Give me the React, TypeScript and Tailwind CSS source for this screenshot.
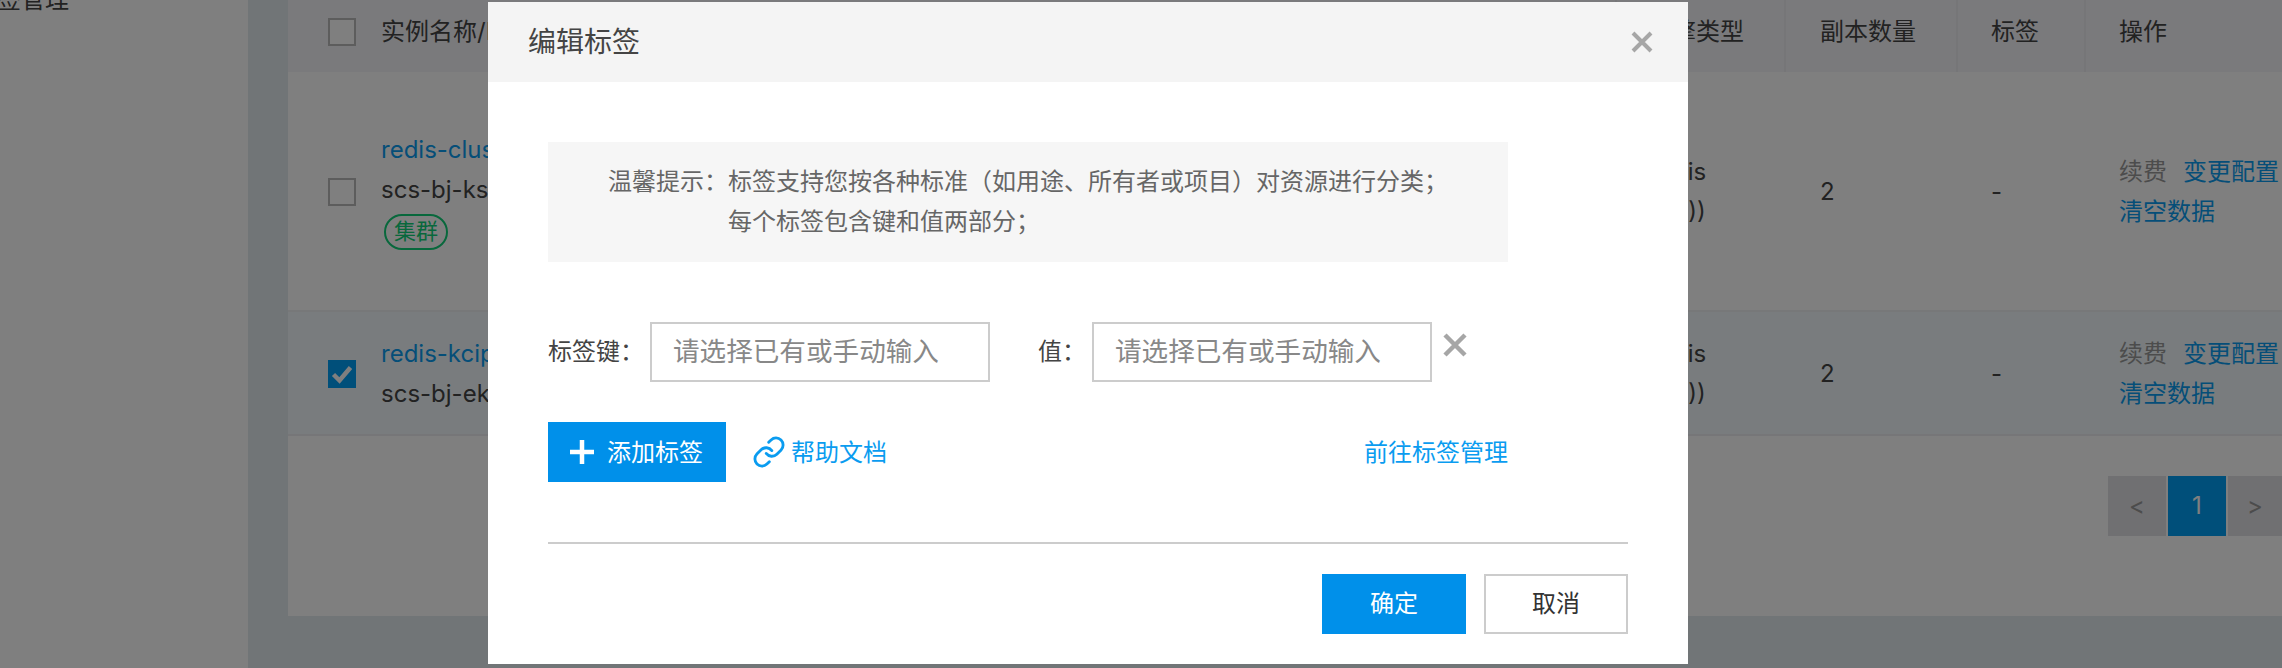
import React from "react";

const cols = "grid grid-cols-[93px_1236px_169px_172px_128px_196px]";

function Checkbox({ checked }: { checked?: boolean }) {
  if (checked) {
    return (
      <div className="w-[28px] h-[28px] bg-[#009ef5] flex items-center justify-center">
        <svg width="22" height="20" viewBox="0 0 22 20">
          <path d="M2.5 10.5 L8.5 16.5 L19.5 3.5" fill="none" stroke="#fff" strokeWidth="4.5" />
        </svg>
      </div>
    );
  }
  return <div className="w-[28px] h-[28px] border-2 border-[#bbbbbb] bg-white" />;
}

function Row({ name, id, badge, checked, className }: { name: string; id: string; badge?: boolean; checked?: boolean; className: string }) {
  return (
    <div className={`${cols} items-center pt-[2px] text-[24px] leading-[40px] text-[#444444] ${className}`}>
      <div className="pl-[40px]"><Checkbox checked={checked} /></div>
      <div className={badge ? "-mt-[4px]" : ""}>
        <div className="text-[#0b9df0]">{name}</div>
        <div>{id}</div>
        {badge && (
          <div className="ml-[3px] mt-[4px] w-[64px] h-[36px] rounded-[18px] border-2 border-[#10d078] text-[#10d078] text-[22px] leading-[30px] text-center">集群</div>
        )}
      </div>
      <div className="pl-[27px]">
        <div>Redis</div>
        <div>(5.0))</div>
      </div>
      <div className="pl-[34px]">2</div>
      <div className="pl-[33px]">-</div>
      <div className="pl-[33px]">
        <div className="flex gap-[16px]">
          <span className="text-[#999999]">续费</span>
          <span className="text-[#0b9df0] whitespace-nowrap">变更配置</span>
        </div>
        <div className="text-[#0b9df0]">清空数据</div>
      </div>
    </div>
  );
}

function Field({ label, labelClass }: { label: string; labelClass: string }) {
  return (
    <>
      <div className={`text-[24px] text-[#444444] whitespace-nowrap ${labelClass}`}>{label}</div>
      <div className="w-[340px] h-[60px] border-2 border-[#cccccc] flex items-center pl-[21px] text-[26.6px] text-[#888888] whitespace-nowrap">请选择已有或手动输入</div>
    </>
  );
}

export default function App() {
  return (
    <div
      className="relative w-full h-[668px] overflow-hidden flex bg-white"
      style={{ fontFamily: 'Inter, "Noto Sans CJK SC", sans-serif' }}
    >
      <aside className="w-[248px] shrink-0 bg-white overflow-hidden">
        <div className="-mt-[24px] -ml-[27px] text-[24px] leading-[48px] text-[#444444] whitespace-nowrap">标签管理</div>
      </aside>
      <main className="flex-1 min-w-0 bg-[#e2eaef] pl-[40px]">
        <div className="bg-white h-[616px] flex flex-col">
          <div className={`${cols} h-[72px] bg-[#f4f4f8] items-center text-[24px] text-[#444444]`}>
            <div className="pl-[40px] pb-[8px]"><Checkbox /></div>
            <div className="h-full flex items-center pb-[8px] border-r-2 border-[#ececf0]">实例名称/ID</div>
            <div className="h-full flex items-center pb-[8px] pl-[31px] border-r-2 border-[#ececf0] whitespace-nowrap">引擎类型</div>
            <div className="h-full flex items-center pb-[8px] pl-[34px] border-r-2 border-[#ececf0]">副本数量</div>
            <div className="h-full flex items-center pb-[8px] pl-[33px] border-r-2 border-[#ececf0]">标签</div>
            <div className="h-full flex items-center pb-[8px] pl-[33px]">操作</div>
          </div>
          <Row name="redis-cluster" id="scs-bj-ksxxxxxx" badge className="h-[240px] border-b-2 border-[#eef0f2]" />
          <Row name="redis-kcip" id="scs-bj-ekxxxxxx" checked className="h-[124px] bg-[#f2f9fd] border-b-2 border-[#ececf0]" />
          <div className="flex justify-end gap-[2px] mt-[40px]">
            <div className="w-[58px] h-[60px] bg-[#e0e0e4] flex items-center justify-center text-[24px] text-[#999999]">&lt;</div>
            <div className="w-[58px] h-[60px] bg-[#009ef5] flex items-center justify-center text-[24px] text-white">1</div>
            <div className="w-[54px] h-[60px] bg-[#e0e0e4] flex items-center justify-center text-[24px] text-[#999999]">&gt;</div>
          </div>
        </div>
      </main>

      <div className="absolute inset-0 bg-black/50" />

      <div className="absolute left-[488px] top-[2px] w-[1200px] h-[662px] bg-white flex flex-col">
        <header className="h-[80px] bg-[#f4f4f4] flex items-center justify-between pl-[40px] pr-[35px]">
          <div className="text-[28px] text-[#444444]">编辑标签</div>
          <svg width="22" height="22" viewBox="0 0 22 22">
            <path d="M2 2 L20 20 M20 2 L2 20" stroke="#a6a6a6" strokeWidth="4" />
          </svg>
        </header>
        <div className="px-[60px] flex-1 flex flex-col">
          <div className="mt-[60px] w-[960px] h-[120px] bg-[#f6f6f6] pl-[60px] pt-[20px] text-[24px] leading-[40px] text-[#666666]">
            <div className="flex">
              <span className="whitespace-nowrap w-[120px]">温馨提示：</span>
              <div className="whitespace-nowrap">
                <div>标签支持您按各种标准（如用途、所有者或项目）对资源进行分类；</div>
                <div>每个标签包含键和值两部分；</div>
              </div>
            </div>
          </div>
          <div className="mt-[60px] flex items-center">
            <Field label="标签键：" labelClass="w-[102px]" />
            <Field label="值：" labelClass="w-[102px] pl-[48px]" />
            <svg className="ml-[11px] -mt-[14px]" width="24" height="24" viewBox="0 0 24 24">
              <path d="M2 2 L22 22 M22 2 L2 22" stroke="#a6a6a6" strokeWidth="4.5" />
            </svg>
          </div>
          <div className="mt-[40px] flex items-center">
            <button className="w-[178px] h-[60px] bg-[#0090ea] text-white text-[24px] flex items-center pl-[21px]">
              <svg width="26" height="26" viewBox="0 0 26 26">
                <path d="M13 1 V25 M1 13 H25" stroke="#fff" strokeWidth="4.5" />
              </svg>
              <span className="ml-[12px] mt-[2px]">添加标签</span>
            </button>
            <svg className="ml-[26px]" width="34" height="34" viewBox="0 0 24 24" fill="none" stroke="#0a9cf0" strokeWidth="2" strokeLinecap="round" strokeLinejoin="round">
              <path d="M10 13a5 5 0 0 0 7.54.54l3-3a5 5 0 0 0-7.07-7.07l-1.72 1.71" />
              <path d="M14 11a5 5 0 0 0-7.54-.54l-3 3a5 5 0 0 0 7.07 7.07l1.71-1.71" />
            </svg>
            <a className="ml-[5px] mt-[2px] text-[24px] text-[#0a9cf0] whitespace-nowrap">帮助文档</a>
            <a className="ml-auto mr-[120px] mt-[2px] text-[24px] text-[#0a9cf0] whitespace-nowrap">前往标签管理</a>
          </div>
          <div className="mt-[60px] h-[2px] bg-[#cccccc]" />
          <div className="mt-[30px] flex justify-end gap-[18px]">
            <button className="w-[144px] h-[60px] bg-[#0090ea] text-white text-[24px]">确定</button>
            <button className="w-[144px] h-[60px] border-2 border-[#cccccc] bg-white text-[#333333] text-[24px]">取消</button>
          </div>
        </div>
      </div>
    </div>
  );
}
